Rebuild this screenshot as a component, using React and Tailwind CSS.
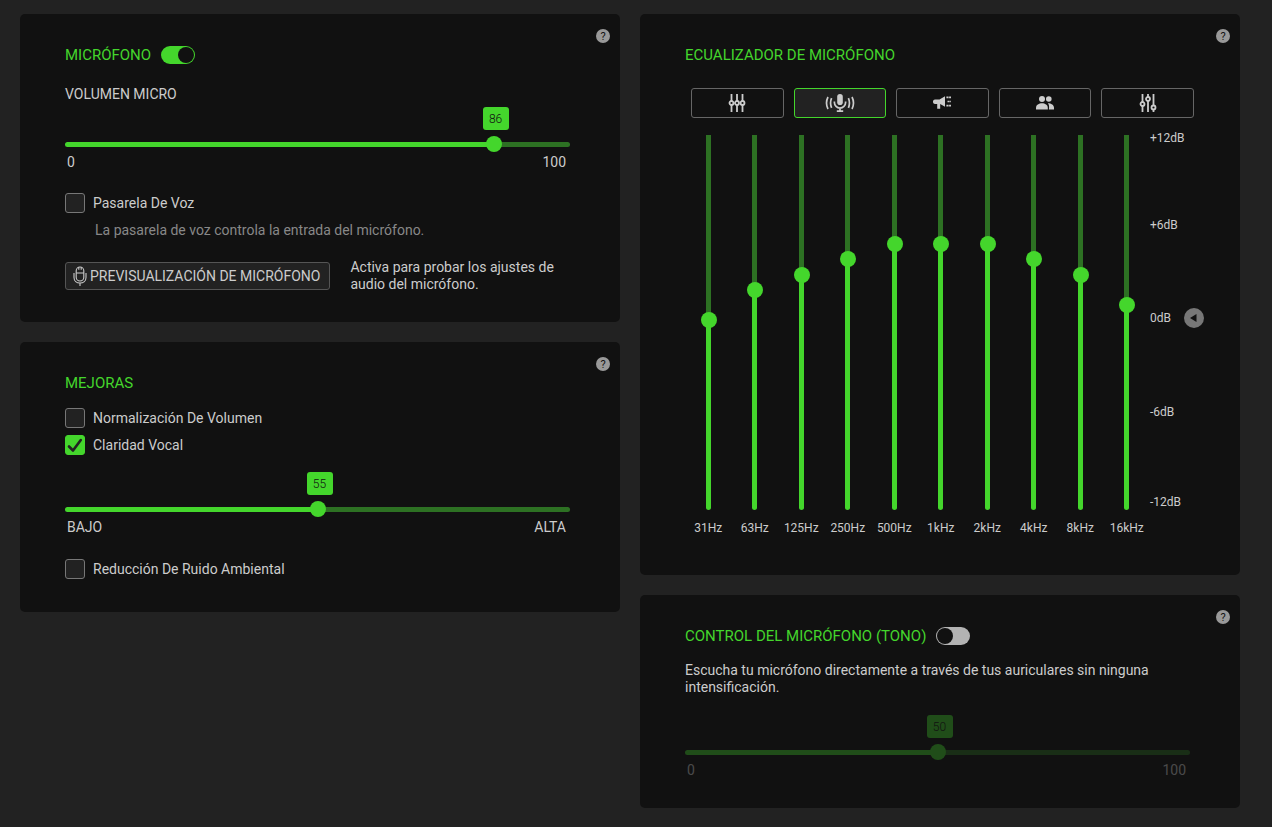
import React, { useState } from 'react';

const PRESETS = [
    { id: 'default', label: 'Predeterminado', Icon: FlatSlidersIcon },
    { id: 'boost', label: 'Refuerzo de micrófono', Icon: LiveMicIcon },
    { id: 'broadcast', label: 'Emisión', Icon: MegaphoneIcon },
    { id: 'conference', label: 'Conferencia', Icon: PeopleIcon },
    { id: 'custom', label: 'Personalizado', Icon: CustomSlidersIcon },
];

const BANDS = [
    { freq: '31Hz', gain: 0 },
    { freq: '63Hz', gain: 2 },
    { freq: '125Hz', gain: 3 },
    { freq: '250Hz', gain: 4 },
    { freq: '500Hz', gain: 5 },
    { freq: '1kHz', gain: 5 },
    { freq: '2kHz', gain: 5 },
    { freq: '4kHz', gain: 4 },
    { freq: '8kHz', gain: 3 },
    { freq: '16kHz', gain: 1 },
];

function FlatSlidersIcon() {
    return (
        <svg width="18" height="18" viewBox="0 0 18 18" fill="none" stroke="currentColor" strokeWidth="1.8">
            <path d="M3.5 0v7M3.5 11v7M9 0v7M9 11v7M14.5 0v7M14.5 11v7" />
            <circle cx="3.5" cy="9" r="2" />
            <circle cx="9" cy="9" r="2" />
            <circle cx="14.5" cy="9" r="2" />
        </svg>
    );
}

function CustomSlidersIcon() {
    return (
        <svg width="18" height="18" viewBox="0 0 18 18" fill="none" stroke="currentColor" strokeWidth="1.8">
            <path d="M3.5 0v8M3.5 12v6M9 0v3M9 7v11M14.5 0v11.5M14.5 15.5v2.5" />
            <circle cx="3.5" cy="10" r="2" />
            <circle cx="9" cy="5" r="2" />
            <circle cx="14.5" cy="13.5" r="2" />
        </svg>
    );
}

function LiveMicIcon() {
    return (
        <svg width="30" height="18" viewBox="0 0 30 18" fill="none" stroke="currentColor" strokeWidth="1.7">
            <rect x="12.2" y="0" width="5.6" height="11" rx="2.8" fill="currentColor" stroke="none" />
            <path d="M9.4 7.5v1a5.6 5.6 0 0 0 11.2 0v-1M15 14v3.2M11.8 17.2h6.4" />
            <path d="M6.6 4.2c-1.3 3-1.3 6.6 0 9.6M3 3c-1.9 3.8-1.9 8.2 0 12" />
            <path d="M23.4 4.2c1.3 3 1.3 6.6 0 9.600M27 3c1.9 3.8 1.9 8.2 0 12" />
        </svg>
    );
}

function MegaphoneIcon() {
    return (
        <svg width="18" height="18" viewBox="0 0 18 18" fill="currentColor">
            <path d="M2 5.5h4.500L12 2.200v10.600L7.200 10v4.800H4.200V10H2A2 2 0 0 1 0 8.200v-.9A2 2 0 0 1 2 5.500z" />
            <path d="M13.400 3.400H18M14.500 7.500H18M13.400 11.600H18" stroke="currentColor" strokeWidth="1.700" strokeDasharray="2.200 .5" />
        </svg>
    );
}

function PeopleIcon() {
    return (
        <svg width="18" height="18" viewBox="0 0 18 18" fill="currentColor">
            <circle cx="6" cy="5" r="3" />
            <circle cx="12.8" cy="5" r="2.8" />
            <path d="M0 15.500v-1.700C0 10.800 3 9.300 6 9.300s5.800 1.500 5.800 4.500v1.700z" />
            <path d="M12.900 15.500H18v-1.700c0-2.800-2.800-4.400-6.100-4.500 1 1.100 1.500 2.500 1 6.200z" />
        </svg>
    );
}

function PreviewMicIcon() {
    return (
        <svg width="14" height="20" viewBox="0 0 14 20" fill="none" stroke="currentColor" strokeWidth="1.1">
            <rect x="3.2" y="1" width="7.6" height="14" rx="3.8" />
            <path d="M3.200 7h7.600M5.800 1.200v2.600M8.200 1.200v2.600" />
            <path d="M1 7v4.500c0 3.300 2.600 5.500 6 5.500s6-2.200 6-5.500V7M7 17v3" />
        </svg>
    );
}

function Card({ className, children }) {
    return (
        <section className={`relative rounded-[5px] bg-[#111111] pt-[31px] pl-[45px] ${className}`}>
            <button
                type="button"
                aria-label="Ayuda"
                className="absolute top-[15px] right-2.5 flex h-3.5 w-3.5 items-center justify-center rounded-full bg-[#999999] text-[11px] leading-none text-[#111111]"
            >
                ?
            </button>
            {children}
        </section>
    );
}

function Title({ children }) {
    return <h2 className="text-[15px] leading-5 text-[#44d62c]">{children}</h2>;
}

function Toggle({ label, checked, onChange }) {
    return (
        <input
            type="checkbox"
            role="switch"
            aria-label={label}
            checked={checked}
            onChange={(e) => onChange(e.target.checked)}
            className="flex h-[18px] w-[34px] appearance-none items-center rounded-full bg-[#b3b3b3] p-px before:block before:h-4 before:w-4 before:rounded-full before:bg-[#111111] checked:justify-end checked:bg-[#44d62c]"
        />
    );
}

function CheckRow({ label, checked, onChange }) {
    return (
        <label className="flex w-fit items-center gap-2 text-sm leading-5">
            <span className="grid">
                <input
                    type="checkbox"
                    checked={checked}
                    onChange={(e) => onChange(e.target.checked)}
                    className="col-start-1 row-start-1 h-5 w-5 appearance-none rounded-[3px] border border-[#777777] bg-[#222222] checked:border-[#44d62c] checked:bg-[#44d62c]"
                />
                {checked && (
                    <svg className="pointer-events-none col-start-1 row-start-1" width="20" height="20" viewBox="0 0 20 20" fill="none" stroke="#222222" strokeWidth="2.6" strokeLinecap="round" strokeLinejoin="round">
                        <path d="M4 11.5l4 4L15.8 5" />
                    </svg>
                )}
            </span>
            {label}
        </label>
    );
}

function Slider({ label, min = 0, max = 100, value, onChange, minLabel, maxLabel, disabled = false }) {
    const ratio = (value - min) / (max - min);
    const center = `calc(8px + (100% - 16px) * ${ratio})`;

    return (
        <div className={disabled ? 'opacity-30' : ''}>
            <div className="flex h-[23px]">
                <div style={{ width: `calc(${center} - 11px)` }} />
                <output className="flex w-[26px] items-center justify-center rounded-[3px] bg-[#44d62c] text-xs font-light text-[#111111]">
                    {value}
                </output>
            </div>
            <input
                type="range"
                aria-label={label}
                min={min}
                max={max}
                value={value}
                disabled={disabled}
                onChange={(e) => onChange(Number(e.target.value))}
                style={{ '--fill': `linear-gradient(to right, #44d62c ${center}, #2d7123 ${center})` }}
                className="mt-1.5 block h-4 w-full appearance-none bg-transparent [&::-webkit-slider-runnable-track]:h-[5px] [&::-webkit-slider-runnable-track]:rounded-full [&::-webkit-slider-runnable-track]:bg-[image:var(--fill)] [&::-webkit-slider-thumb]:-mt-[6px] [&::-webkit-slider-thumb]:h-4 [&::-webkit-slider-thumb]:w-4 [&::-webkit-slider-thumb]:appearance-none [&::-webkit-slider-thumb]:rounded-full [&::-webkit-slider-thumb]:bg-[#44d62c]"
            />
            <div className="mt-0.5 flex justify-between pr-1 pl-0.5 text-sm leading-4">
                <span>{minLabel}</span>
                <span>{maxLabel}</span>
            </div>
        </div>
    );
}

function BandSlider({ freq, gain, onChange }) {
    const center = `calc(8px + (100% - 16px) * ${(gain + 12) / 24})`;

    return (
        <label className="flex flex-1 basis-0 flex-col items-center">
            <input
                type="range"
                min={-12}
                max={12}
                value={gain}
                onChange={(e) => onChange(Number(e.target.value))}
                style={{
                    '--fill': `linear-gradient(to top, #44d62c ${center}, #2d7123 ${center}, #2d7123 calc(100% - 5px), transparent calc(100% - 5px))`,
                }}
                className="h-[380px] w-4 appearance-none bg-transparent [direction:rtl] [writing-mode:vertical-lr] [&::-webkit-slider-runnable-track]:w-[5px] [&::-webkit-slider-runnable-track]:rounded-full [&::-webkit-slider-runnable-track]:bg-[image:var(--fill)] [&::-webkit-slider-thumb]:-ml-[5px] [&::-webkit-slider-thumb]:h-4 [&::-webkit-slider-thumb]:w-4 [&::-webkit-slider-thumb]:appearance-none [&::-webkit-slider-thumb]:rounded-full [&::-webkit-slider-thumb]:bg-[#44d62c]"
            />
            <span className="mt-2.5 text-xs leading-4">{freq}</span>
        </label>
    );
}

const App = () => {
    const [micOn, setMicOn] = useState(true);
    const [volume, setVolume] = useState(86);
    const [voiceGate, setVoiceGate] = useState(false);
    const [normalize, setNormalize] = useState(false);
    const [clarity, setClarity] = useState(true);
    const [clarityLevel, setClarityLevel] = useState(55);
    const [noiseReduction, setNoiseReduction] = useState(false);
    const [preset, setPreset] = useState('boost');
    const [bands, setBands] = useState(BANDS);
    const [sidetoneOn, setSidetoneOn] = useState(false);
    const [sidetone, setSidetone] = useState(50);

    const setGain = (freq, gain) => {
        setBands(bands.map((b) => (b.freq === freq ? { ...b, gain } : b)));
    };

    return (
        <main className="grid min-h-screen grid-cols-2 items-start gap-5 bg-[#222222] pt-3.5 pr-8 pb-4 pl-5 font-[Roboto,sans-serif] text-[#cccccc]">
            <div className="flex flex-col gap-5">
                <Card className="pr-[50px] pb-[29px]">
                    <div className="flex items-center gap-2.5">
                        <Title>MICRÓFONO</Title>
                        <Toggle label="Micrófono" checked={micOn} onChange={setMicOn} />
                    </div>
                    <h3 className="mt-[19px] mb-[3px] text-sm leading-5">VOLUMEN MICRO</h3>
                    <Slider label="Volumen micro" value={volume} onChange={setVolume} minLabel="0" maxLabel="100" />
                    <div className="mt-[23px]">
                        <CheckRow label="Pasarela De Voz" checked={voiceGate} onChange={setVoiceGate} />
                    </div>
                    <p className="mt-[7px] pl-[30px] text-sm leading-5 text-[#888888]">
                        La pasarela de voz controla la entrada del micrófono.
                    </p>
                    <div className="mt-[19px] flex items-center gap-5">
                        <button
                            type="button"
                            className="flex h-7 shrink-0 items-center gap-[3px] rounded-[3px] border border-[#555555] bg-[#222222] pr-[9px] pl-[7px] text-sm"
                        >
                            <PreviewMicIcon />
                            PREVISUALIZACIÓN DE MICRÓFONO
                        </button>
                        <p className="text-sm leading-[17px]">Activa para probar los ajustes de audio del micrófono.</p>
                    </div>
                </Card>

                <Card className="pr-[50px] pb-[33px]">
                    <Title>MEJORAS</Title>
                    <div className="mt-[15px] mb-[17px] flex flex-col gap-[7px]">
                        <CheckRow label="Normalización De Volumen" checked={normalize} onChange={setNormalize} />
                        <CheckRow label="Claridad Vocal" checked={clarity} onChange={setClarity} />
                    </div>
                    <Slider
                        label="Claridad vocal"
                        min={10}
                        value={clarityLevel}
                        onChange={setClarityLevel}
                        minLabel="BAJO"
                        maxLabel="ALTA"
                    />
                    <div className="mt-6">
                        <CheckRow label="Reducción De Ruido Ambiental" checked={noiseReduction} onChange={setNoiseReduction} />
                    </div>
                </Card>
            </div>

            <div className="flex flex-col gap-5">
                <Card className="pr-9 pb-[39px]">
                    <Title>ECUALIZADOR DE MICRÓFONO</Title>
                    <div className="mt-[23px] mr-2.5 ml-1.5 flex gap-2.5">
                        {PRESETS.map(({ id, label, Icon }) => (
                            <button
                                key={id}
                                type="button"
                                aria-label={label}
                                aria-pressed={preset === id}
                                onClick={() => setPreset(id)}
                                className={`flex h-[30px] flex-1 items-center justify-center rounded-[3px] border ${
                                    preset === id ? 'border-[#44d62c] bg-[#222222]' : 'border-[#666666]'
                                }`}
                            >
                                <Icon />
                            </button>
                        ))}
                    </div>
                    <div className="mt-3 flex">
                        <div className="flex flex-1">
                            {bands.map((band) => (
                                <BandSlider key={band.freq} {...band} onChange={(gain) => setGain(band.freq, gain)} />
                            ))}
                        </div>
                        <div className="grid h-[380px] w-[54px] grid-rows-[87fr_93fr_93fr_90fr_auto] text-xs leading-4">
                            <span>+12dB</span>
                            <span>+6dB</span>
                            <span className="flex h-4 items-center justify-between">
                                0dB
                                <button
                                    type="button"
                                    aria-label="Restablecer"
                                    onClick={() => setBands(BANDS)}
                                    className="flex h-5 w-5 items-center justify-center rounded-full bg-[#777777] text-[#111111]"
                                >
                                    <svg width="8" height="8" viewBox="0 0 8 8" fill="currentColor">
                                        <path d="M0 4L6.500 0v8z" />
                                    </svg>
                                </button>
                            </span>
                            <span>-6dB</span>
                            <span>-12dB</span>
                        </div>
                    </div>
                </Card>

                <Card className="pr-[50px] pb-[30px]">
                    <div className="flex items-center gap-2.5">
                        <Title>CONTROL DEL MICRÓFONO (TONO)</Title>
                        <Toggle label="Control del micrófono (tono)" checked={sidetoneOn} onChange={setSidetoneOn} />
                    </div>
                    <p className="mt-4 mb-[19px] text-sm leading-[17px]">
                        Escucha tu micrófono directamente a través de tus auriculares sin ninguna intensificación.
                    </p>
                    <Slider
                        label="Nivel de tono"
                        value={sidetone}
                        onChange={setSidetone}
                        minLabel="0"
                        maxLabel="100"
                        disabled={!sidetoneOn}
                    />
                </Card>
            </div>
        </main>
    );
};

export default App;
